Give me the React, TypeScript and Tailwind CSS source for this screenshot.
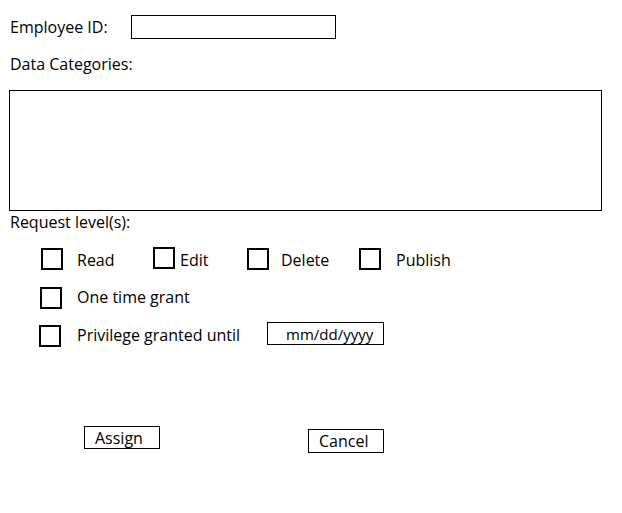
import React from "react";

function Box({ className = "" }: { className?: string }) {
  return <div className={"w-[22px] h-[22px] border-2 border-black shrink-0 " + className} />;
}

export default function App() {
  return (
    <div
      className="w-[622px] h-[513px] bg-white text-black text-[16px] leading-[20px] overflow-hidden"
      style={{ fontFamily: '"Open Sans", "Noto Sans", sans-serif' }}
    >
      <div className="flex flex-col pt-[15px]">
        <div className="flex items-center h-[24px]">
          <span className="w-[131px] pl-[10px]">Employee ID:</span>
          <div className="w-[205px] h-[24px] border border-black" />
        </div>
        <div className="mt-[15px] h-[20px] pl-[10px]">Data Categories:</div>
        <div className="mt-[16px] ml-[9px] w-[593px] h-[121px] border border-black" />
        <div className="mt-[1px] h-[20px] pl-[10px]">Request level(s):</div>

        <div className="mt-[16px] flex items-center h-[22px] pl-[41px]">
          <div className="w-[112px] flex items-center">
            <Box />
            <span className="ml-[14px] mt-[1px]">Read</span>
          </div>
          <div className="w-[94px] flex items-center">
            <Box className="-mt-[2px]" />
            <span className="ml-[5px] mt-[1px]">Edit</span>
          </div>
          <div className="w-[112px] flex items-center">
            <Box />
            <span className="ml-[12px] mt-[1px]">Delete</span>
          </div>
          <div className="flex items-center">
            <Box />
            <span className="ml-[15px] mt-[1px]">Publish</span>
          </div>
        </div>

        <div className="mt-[17px] flex items-center h-[22px] pl-[40px]">
          <Box />
          <span className="ml-[15px] -mt-[2px]">One time grant</span>
        </div>

        <div className="mt-[13px] flex items-start pl-[39px]">
          <Box className="mt-[3px]" />
          <span className="ml-[16px] mt-[3px]">Privilege granted until</span>
          <div className="ml-auto mr-[238px] w-[117px] h-[23px] border border-black flex items-center pl-[18px] text-[15px]">
            mm/dd/yyyy
          </div>
        </div>

        <div className="mt-[79px] flex items-start pl-[84px]">
          <div className="w-[76px] h-[23px] border border-black flex items-center pl-[10px]">
            Assign
          </div>
          <div className="ml-[148px] mt-[3px] w-[76px] h-[24px] border border-black flex items-center pl-[10px]">
            Cancel
          </div>
        </div>
      </div>
    </div>
  );
}
